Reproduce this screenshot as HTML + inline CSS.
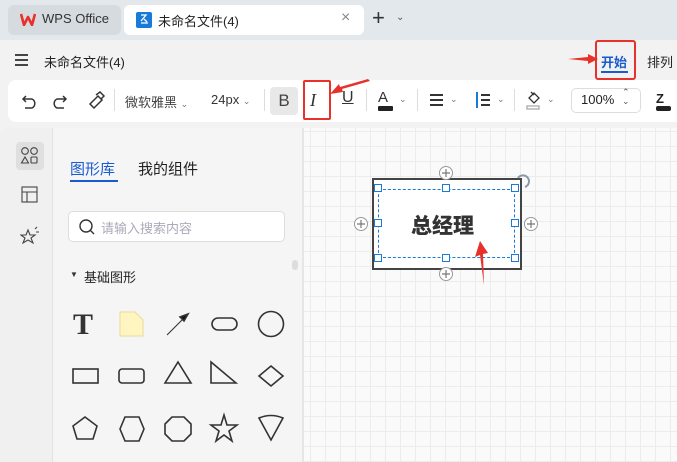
<!DOCTYPE html><html><head><meta charset="utf-8"><style>
*{box-sizing:border-box;margin:0;padding:0}
body{width:677px;height:462px;overflow:hidden;position:relative;background:#f2f2f2;font-family:"Liberation Sans","Noto Sans CJK SC",sans-serif;color:#222}
.a{position:absolute}
.cn{font-family:"Liberation Sans","Noto Sans CJK SC",sans-serif}
</style></head><body>
<div class="a" style="left:0;top:0;width:677px;height:40px;background:#e3e8ec"></div>
<div class="a" style="left:8px;top:5px;width:113px;height:30px;background:#d6dbe0;border-radius:6px"></div>
<svg class="a" style="left:20px;top:13px" width="16" height="13" viewBox="0 0 16 13"><path d="M1 1 L4 12 L8 4 L12 12 L15 1" fill="none" stroke="#e8312a" stroke-width="2.6" stroke-linejoin="round"/></svg>
<div class="a" style="left:42px;top:11px;font-size:13px;color:#333">WPS Office</div>
<div class="a" style="left:124px;top:5px;width:240px;height:30px;background:#fff;border-radius:6px"></div>
<div class="a" style="left:136px;top:12px;width:16px;height:16px;background:#1a7ad8;border-radius:2px"></div>
<svg class="a" style="left:138px;top:13px" width="12" height="13"><path d="M3 2 L8 2 L3 8 M3 10 L10 10 M6 6 L9 9" stroke="#fff" stroke-width="1.3" fill="none"/></svg>
<div class="a cn" style="left:158px;top:11px;font-size:13px;color:#222">未命名文件(4)</div>
<div class="a" style="left:341px;top:9px;font-size:16px;color:#888">×</div>
<div class="a" style="left:372px;top:5px;font-size:22px;color:#333;line-height:26px">+</div>
<div class="a" style="left:396px;top:12px;font-size:10px;color:#555">⌄</div>
<div class="a" style="left:15px;top:54px;width:13px;height:2px;background:#444;box-shadow:0 5px #444,0 10px #444"></div>
<div class="a cn" style="left:44px;top:52px;font-size:13px">未命名文件(4)</div>
<div class="a cn" style="left:601px;top:52px;font-size:13px;color:#1a5bd0;font-weight:bold">开始</div>
<div class="a" style="left:601px;top:71px;width:27px;height:2px;background:#1a5bd0"></div>
<div class="a" style="left:595px;top:40px;width:41px;height:40px;border:2px solid #e8312a;border-radius:3px"></div>
<div class="a cn" style="left:647px;top:52px;font-size:13px">排列</div>
<svg class="a" style="left:568px;top:54px" width="30" height="10"><path d="M0 5 L20 3 L20 0 L30 5 L20 10 L20 7Z" fill="#e8312a"/></svg>
<div class="a" style="left:8px;top:80px;width:680px;height:42px;background:#fff;border-radius:8px"></div>
<svg class="a" style="left:20px;top:90px" width="90" height="22" fill="none" stroke="#333" stroke-width="1.5"><path d="M6 6 L3 9 L6 12 M3 9 H12 a5 5 0 0 1 0 9 H5"/><path d="M43 6 L46 9 L43 12 M46 9 H37 a5 5 0 0 0 0 9 H44"/><path d="M70 14 L78 6 L82 10 L74 18Z M76 5 L80 2 L84 6 L81 9"/></svg>
<div class="a" style="left:114px;top:89px;width:1px;height:22px;background:#ddd"></div>
<div class="a cn" style="left:125px;top:92px;font-size:13px;color:#444">微软雅黑 <span style="font-size:9px;color:#777">⌄</span></div>
<div class="a" style="left:211px;top:92px;font-size:13px;color:#333">24px <span style="font-size:9px;color:#777">⌄</span></div>
<div class="a" style="left:264px;top:89px;width:1px;height:22px;background:#ddd"></div>
<div class="a" style="left:270px;top:87px;width:28px;height:28px;background:#e8e8e8;border-radius:4px;text-align:center;font-size:17px;line-height:28px;color:#444">B</div>
<div class="a" style="left:303px;top:80px;width:28px;height:40px;border:2px solid #e8312a;border-radius:2px"></div>
<div class="a" style="left:310px;top:90px;font-size:18px;font-style:italic;font-family:'Liberation Serif',serif;color:#333">I</div>
<svg class="a" style="left:328px;top:78px" width="42" height="20"><path d="M42 3 L14 11 L15 14 L2 16 L11 6 L12 9 L40 1Z" fill="#e8312a"/></svg>
<div class="a" style="left:342px;top:89px;font-size:16px;color:#333;text-decoration:underline">U</div>
<div class="a" style="left:366px;top:89px;width:1px;height:22px;background:#ddd"></div>
<div class="a" style="left:378px;top:89px;font-size:15px;color:#333">A</div>
<div class="a" style="left:378px;top:106px;width:15px;height:5px;background:#222;border-radius:1px"></div>
<div class="a" style="left:399px;top:94px;font-size:9px;color:#777">⌄</div>
<div class="a" style="left:417px;top:89px;width:1px;height:22px;background:#ddd"></div>
<div class="a" style="left:430px;top:94px;width:13px;height:1.5px;background:#333;box-shadow:0 5px #333,0 10px #333"></div>
<div class="a" style="left:450px;top:94px;font-size:9px;color:#777">⌄</div>
<div class="a" style="left:476px;top:92px;width:2px;height:16px;background:#1a7ad8"></div>
<div class="a" style="left:481px;top:94px;width:9px;height:1.5px;background:#333;box-shadow:0 5px #333,0 10px #333"></div>
<div class="a" style="left:497px;top:94px;font-size:9px;color:#777">⌄</div>
<div class="a" style="left:514px;top:89px;width:1px;height:22px;background:#ddd"></div>
<svg class="a" style="left:526px;top:90px" width="16" height="20" fill="none" stroke="#333" stroke-width="1.3"><path d="M3 8 L8 3 L13 8 L8 13Z M5 2 L8 5"/><rect x="1" y="16" width="12" height="3" stroke="#aaa"/></svg>
<div class="a" style="left:547px;top:94px;font-size:9px;color:#777">⌄</div>
<div class="a" style="left:571px;top:88px;width:70px;height:25px;border:1px solid #ddd;border-radius:5px"></div>
<div class="a" style="left:581px;top:92px;font-size:13px;color:#222">100%</div>
<div class="a" style="left:622px;top:88px;font-size:9px;color:#555;line-height:9px">⌃<br>⌄</div>
<div class="a" style="left:656px;top:91px;font-size:13px;font-weight:bold;color:#222">Z</div>
<div class="a" style="left:656px;top:106px;width:15px;height:5px;background:#222;border-radius:2px"></div>
<div class="a" style="left:0;top:128px;width:52px;height:334px;background:#f0f0f0;border-top-left-radius:8px"></div>
<div class="a" style="left:52px;top:128px;width:250px;height:334px;background:#f5f5f5;border-left:1px solid #e2e2e2"></div>
<div class="a" style="left:16px;top:142px;width:28px;height:28px;background:#dfdfdf;border-radius:4px"></div>
<svg class="a" style="left:20px;top:146px" width="20" height="20" fill="none" stroke="#444" stroke-width="1.1"><circle cx="5" cy="5" r="3.3"/><circle cx="14" cy="5" r="3.3"/><path d="M5 11 L8.5 17 H1.5Z"/><rect x="11" y="11" width="6" height="6" rx="1"/></svg>
<svg class="a" style="left:20px;top:186px" width="20" height="18" fill="none" stroke="#444" stroke-width="1.1"><rect x="2" y="1" width="15" height="15"/><path d="M2 6 H17 M7 6 V16"/></svg>
<svg class="a" style="left:20px;top:226px" width="20" height="20" fill="none" stroke="#444" stroke-width="1.1"><path d="M8 4 L10 9 L15 9 L11 12 L13 17 L8 14 L3 17 L5 12 L1 9 L6 9Z M15 3 L17 1 M16 6 H19"/></svg>
<div class="a cn" style="left:70px;top:158px;font-size:15px;color:#1a5bd0">图形库</div>
<div class="a" style="left:70px;top:180px;width:48px;height:2px;background:#1a5bd0"></div>
<div class="a cn" style="left:138px;top:158px;font-size:15px;color:#222">我的组件</div>
<div class="a" style="left:68px;top:211px;width:217px;height:31px;background:#fff;border:1px solid #ddd;border-radius:5px"></div>
<svg class="a" style="left:78px;top:218px" width="18" height="18" fill="none" stroke="#333" stroke-width="1.4"><circle cx="8" cy="8" r="6"/><path d="M12.5 12.5 L16 16"/></svg>
<div class="a cn" style="left:101px;top:218px;font-size:13px;color:#aab">请输入搜索内容</div>
<div class="a" style="left:292px;top:260px;width:6px;height:10px;background:#ddd;border-radius:3px"></div>
<div class="a" style="left:70px;top:270px;font-size:8px;color:#333">▼</div>
<div class="a cn" style="left:84px;top:267px;font-size:13px;color:#222">基础图形</div>
<svg class="a" style="left:60px;top:300px" width="240" height="150" fill="none" stroke="#333" stroke-width="1.6">
<text x="13" y="34" font-family="Liberation Serif" font-weight="bold" font-size="30" fill="#333" stroke="none">T</text>
<path d="M60 12 H75 L83 20 V36 H60Z" fill="#fff5c0" stroke="#e8dc9a" stroke-width="1"/>
<path d="M107 35 L125 17" stroke-width="1.1"/><path d="M128 14 L120 17 L124 21Z" fill="#111"/>
<rect x="152" y="18" width="25" height="12" rx="6"/>
<circle cx="211" cy="24" r="12.5"/>
<rect x="13" y="69" width="25" height="14"/>
<rect x="59" y="69" width="25" height="14" rx="3"/>
<path d="M118 62 L131 83 H105Z"/>
<path d="M151 62 V83 H176Z"/>
<path d="M211 66 L223 76 L211 86 L199 76Z"/>
<path d="M25 117 L37 126 L33 139 H17 L13 126Z"/>
<path d="M65 117 H79 L84 129 L79 141 H65 L60 129Z"/>
<path d="M112 117 H124 L131 124 V134 L124 141 H112 L105 134 V124Z"/>
<path d="M164 115 L167 125 L177 125 L169 131 L172 141 L164 135 L156 141 L159 131 L151 125 L161 125Z"/>
<path d="M199 118 Q211 113 223 118 L211 140Z"/>
</svg>
<div class="a" style="left:302px;top:128px;width:375px;height:334px;background-color:#fafafa;background-image:linear-gradient(#ececec 1px,transparent 1px),linear-gradient(90deg,#ececec 1px,transparent 1px);background-size:15px 15px;background-position:8px 3px"></div>
<div class="a" style="left:302px;top:128px;width:2px;height:334px;background:#e6e6e6"></div>
<div class="a" style="left:372px;top:178px;width:150px;height:92px;background:#fff;border:2px solid #444"></div>
<div class="a" style="left:378px;top:189px;width:137px;height:69px;border:1px dashed #1a7ad8"></div>
<div class="a cn" style="left:411px;top:210px;font-size:21px;font-weight:900;color:#333">总经理</div>
<svg class="a" style="left:350px;top:165px" width="200" height="120">
<g fill="#fff" stroke="#1a7ad8" stroke-width="1"><rect x="24.5" y="19.5" width="7" height="7"/><rect x="92.5" y="19.5" width="7" height="7"/><rect x="161.5" y="19.5" width="7" height="7"/><rect x="24.5" y="54.5" width="7" height="7"/><rect x="161.5" y="54.5" width="7" height="7"/><rect x="24.5" y="89.5" width="7" height="7"/><rect x="92.5" y="89.5" width="7" height="7"/><rect x="161.5" y="89.5" width="7" height="7"/></g>
<g fill="#fff" stroke="#999" stroke-width="1"><circle cx="96" cy="8" r="6.5"/><circle cx="96" cy="109" r="6.5"/><circle cx="11" cy="59" r="6.5"/><circle cx="181" cy="59" r="6.5"/></g>
<g stroke="#777" stroke-width="1.2"><path d="M92 8 H100 M96 4 V12 M92 109 H100 M96 105 V113 M7 59 H15 M11 55 V63 M177 59 H185 M181 55 V63"/></g>
<path d="M168 13 A6 6 0 1 1 175 22" fill="none" stroke="#8899aa" stroke-width="2"/>
<path d="M134 120 L130 90 L125 92 L130 76 L138 88 L133 89Z" fill="#e8312a"/>
</svg>
</body></html>
